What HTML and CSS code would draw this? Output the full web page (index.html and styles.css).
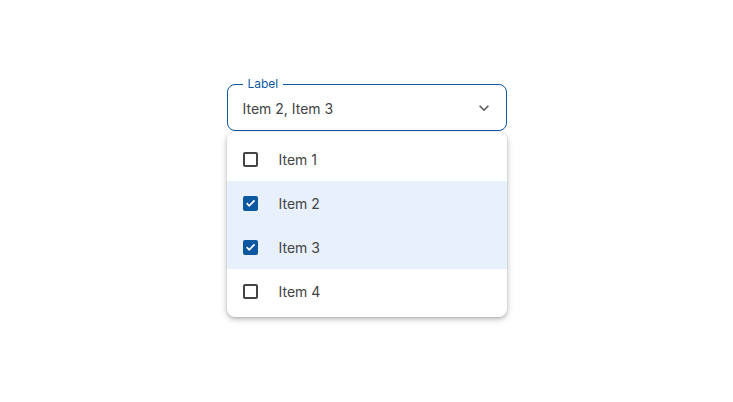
FILE: index.html
```html
<!DOCTYPE html>
<html>
<head>
<meta charset="utf-8">
<link rel="stylesheet" href="styles.css">
</head>
<body>
<div class="select">
  <div class="field">
    <span class="label">Label</span>
    <span class="value">Item 2, Item 3</span>
    <svg class="chevron" width="20" height="20" viewBox="0 0 24 24"><path d="M16.59 8.59L12 13.17 7.41 8.59 6 10l6 6 6-6z" fill="#5f5f5f"/></svg>
  </div>
  <ul class="menu">
    <li class="option"><span class="box"></span><span>Item 1</span></li>
    <li class="option selected"><span class="box checked"><svg width="12" height="12" viewBox="0 0 12 12"><path d="M1.8 6.2l2.8 2.8L10.4 3.2" fill="none" stroke="#fff" stroke-width="1.9"/></svg></span><span>Item 2</span></li>
    <li class="option selected"><span class="box checked"><svg width="12" height="12" viewBox="0 0 12 12"><path d="M1.8 6.2l2.8 2.8L10.4 3.2" fill="none" stroke="#fff" stroke-width="1.9"/></svg></span><span>Item 3</span></li>
    <li class="option"><span class="box"></span><span>Item 4</span></li>
  </ul>
</div>
</body>
</html>
```
FILE: styles.css
```css
html, body {
  margin: 0;
  padding: 0;
  background: #fff;
}
body {
  height: 100vh;
  box-sizing: border-box;
  padding-bottom: 1px;
  display: flex;
  align-items: center;
  justify-content: center;
  font-family: Inter, "Noto Sans", sans-serif;
  color: #444;
}
.select {
  width: 280px;
  display: flex;
  flex-direction: column;
  gap: 1px;
}
.field {
  position: relative;
  box-sizing: border-box;
  height: 47px;
  border: 1px solid #0b57a0;
  border-radius: 8px;
  display: flex;
  align-items: center;
  padding: 0 12px 0 15px;
  justify-content: space-between;
}
.label {
  position: absolute;
  top: -8px;
  left: 15px;
  padding: 0 5px;
  background: #fff;
  font-size: 12px;
  line-height: 14px;
  color: #0b57a0;
}
.value {
  font-size: 14px;
  color: #444;
  margin-top: 2px;
}
.chevron {
  display: block;
  margin-top: 1px;
}
.menu {
  list-style: none;
  margin: 0;
  padding: 5px 0 4px;
  background: #fff;
  border-radius: 8px;
  box-shadow: 0 2px 6px rgba(0,0,0,0.28), 0 1px 2px rgba(0,0,0,0.12);
}
.option {
  height: 44px;
  display: flex;
  align-items: center;
  padding-left: 16px;
  gap: 21px;
  font-size: 14px;
  color: #444;
}
.option.selected {
  background: #e8f0fc;
}
.box {
  box-sizing: border-box;
  width: 15px;
  height: 15px;
  border: 2px solid #444;
  border-radius: 2px;
  display: flex;
  align-items: center;
  justify-content: center;
}
.box.checked {
  background: #0b57a0;
  border-color: #0b57a0;
}
```
